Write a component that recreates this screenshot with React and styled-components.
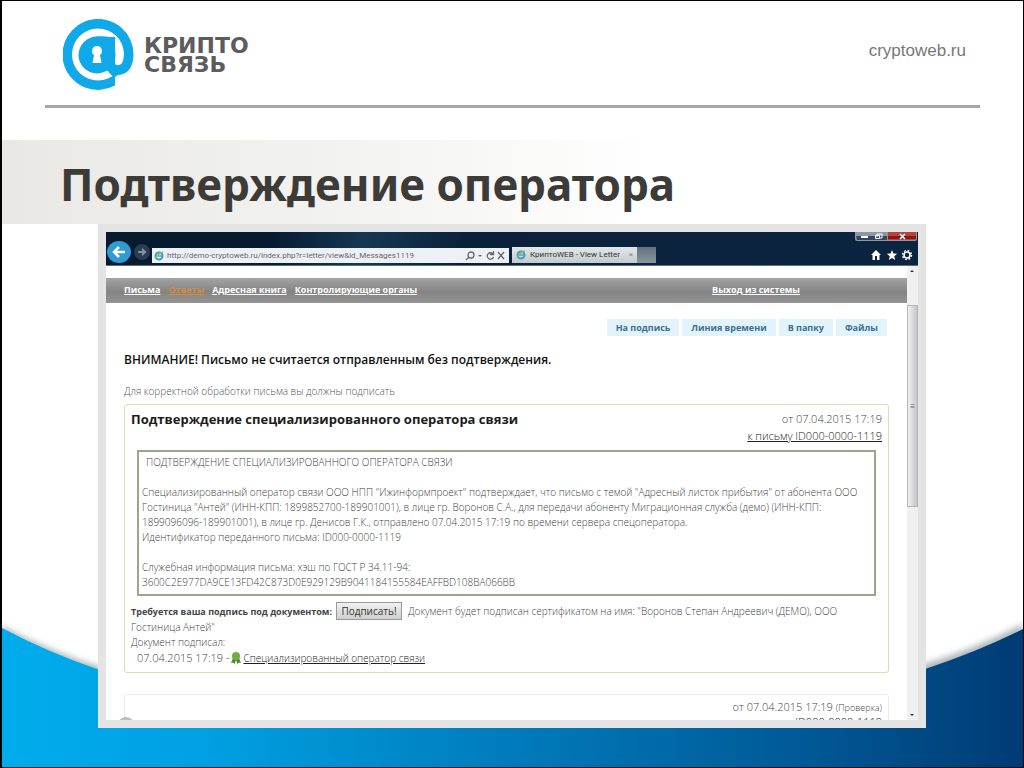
import React from 'react';
import styled, { createGlobalStyle } from 'styled-components';

const GlobalStyle = createGlobalStyle`
  * {
    box-sizing: border-box;
  }
  body {
    margin: 0;
    font-family: 'Open Sans', 'Noto Sans', sans-serif;
    background: #fff;
  }
  h1, h2, p {
    margin: 0;
  }
`;

const menu = ['Письма', 'Ответы', 'Адресная книга', 'Контролирующие органы'];
const actions = ['На подпись', 'Линия времени', 'В папку', 'Файлы'];

const App = () => {
  return (
    <>
      <GlobalStyle />
      <StSlide>
        <Wave />
        <StHeader>
          <StLogo>
            <LogoMark />
            <span>
              КРИПТО
              <br />
              СВЯЗЬ
            </span>
          </StLogo>
          <StSite href="#site">cryptoweb.ru</StSite>
        </StHeader>
        <StTitle>Подтверждение оператора</StTitle>
        <StFrame>
          <BrowserBar />
          <StViewport>
            <StPage>
              <StMenu>
                {menu.map((name) => (
                  <StMenuLink key={name} href="#menu" $active={name === 'Ответы'}>
                    {name}
                  </StMenuLink>
                ))}
                <StExit href="#exit">Выход из системы</StExit>
              </StMenu>
              <StContent>
                <StActions>
                  {actions.map((name) => (
                    <StAction key={name} type="button">
                      {name}
                    </StAction>
                  ))}
                </StActions>
                <StWarning>
                  ВНИМАНИЕ! Письмо не считается отправленным без подтверждения.
                </StWarning>
                <StHint>Для корректной обработки письма вы должны подписать</StHint>
                <Letter />
                <StNextCard>
                  <StBadge />
                  <StDate>
                    от 07.04.2015 17:19 <small>(Проверка)</small>
                  </StDate>
                  <StLink href="#next">ID000-0000-1119</StLink>
                </StNextCard>
              </StContent>
            </StPage>
            <StScroll>
              <StArrow viewBox="0 0 10 10">
                <path d="M3 6l2-2 2 2z" />
              </StArrow>
              <StThumb>≡</StThumb>
              <StArrow viewBox="0 0 10 10">
                <path d="M3 4l2 2 2-2z" />
              </StArrow>
            </StScroll>
          </StViewport>
        </StFrame>
      </StSlide>
    </>
  );
};

const Letter = () => (
  <StCard>
    <StCardHead>
      <h2>Подтверждение специализированного оператора связи</h2>
      <StMeta>
        <StDate>от 07.04.2015 17:19</StDate>
        <StLink href="#letter">к письму ID000-0000-1119</StLink>
      </StMeta>
    </StCardHead>
    <StDocument>
      <StDocTitle>ПОДТВЕРЖДЕНИЕ СПЕЦИАЛИЗИРОВАННОГО ОПЕРАТОРА СВЯЗИ</StDocTitle>
      <p>
        Специализированный оператор связи ООО НПП "Ижинформпроект" подтверждает,
        что письмо с темой "Адресный листок прибытия" от абонента ООО
        <br />
        Гостиница "Антей" (ИНН-КПП: 1899852700-189901001), в лице гр. Воронов
        С.А., для передачи абоненту Миграционная служба (демо) (ИНН-КПП:
        <br />
        1899096096-189901001), в лице гр. Денисов Г.К., отправлено 07.04.2015
        17:19 по времени сервера спецоператора.
        <br />
        Идентификатор переданного письма: ID000-0000-1119
      </p>
      <p>
        Служебная информация письма: хэш по ГОСТ Р 34.11-94:
        <br />
        3600C2E977DA9CE13FD42C873D0E929129B9041184155584EAFFBD108BA066BB
      </p>
    </StDocument>
    <StSign>
      <b>Требуется ваша подпись под документом:</b>
      <StSignButton type="button">Подписать!</StSignButton>
      Документ будет подписан сертификатом на имя: "Воронов Степан Андреевич
      (ДЕМО), ООО
      <br />
      Гостиница Антей"
      <br />
      Документ подписал:
      <StSigner>
        <StDate>07.04.2015 17:19 -</StDate>
        <svg width="10" height="12" viewBox="0 0 10 12">
          <path d="M2 6L0 11l2-.5L3.500 12 5 8l1.500 4L8 10.500l2 .5-2-5z" fill="#4d8a2c" />
          <circle cx="5" cy="4" r="4" fill="#6fae45" />
        </svg>
        <StLink href="#operator">Специализированный оператор связи</StLink>
      </StSigner>
    </StSign>
  </StCard>
);

const BrowserBar = () => (
  <StBrowser>
    <StRound aria-label="Назад" $back>
      <svg width="16" height="16" viewBox="0 0 16 16" fill="none" stroke="#fff" strokeWidth="2.500">
        <path d="M14 8H3M8 3L3 8l5 5" />
      </svg>
    </StRound>
    <StRound aria-label="Вперёд">
      <svg width="10" height="10" viewBox="0 0 16 16" fill="none" stroke="#8795a3" strokeWidth="3">
        <path d="M2 8h11M8 3l5 5-5 5" />
      </svg>
    </StRound>
    <StAddress>
      <PageIcon />
      <input
        aria-label="Адрес"
        defaultValue="http://demo-cryptoweb.ru/index.php?r=letter/view&id_Messages1119"
      />
      <svg width="40" height="10" viewBox="0 0 40 10" fill="none" stroke="#666" strokeWidth="1.300">
        <circle cx="6" cy="4" r="3" />
        <path d="M4 6L1 9M28 3a3.200 3.200 0 1 0 .5 3M28.500 0v3.500H25M33 1l6 7M39 1l-6 7" />
        <path d="M13 4h4l-2 2z" fill="#666" stroke="none" />
      </svg>
    </StAddress>
    <StTab>
      <PageIcon />
      <span>КриптоWEB - View Letter</span>
      <i>×</i>
    </StTab>
    <StNewTab />
    <StTools>
      <svg width="62" height="10" viewBox="0 0 62 10">
        <path d="M0 0h62v7q0 2-2 2H2Q0 9 0 7z" fill="#8d98a5" />
        <path d="M1 4h31v4H2z" fill="#35475b" />
        <path d="M33 0h28v7q0 1-1 1H33z" fill="#b9403c" />
        <path d="M33 4h28v3H33z" fill="#8d1712" />
        <path d="M6 4h7v2H6z" fill="#fff" />
        <path d="M22 5V2h5v4h-2M20.500 3.500h4v3h-4z" fill="none" stroke="#fff" />
        <path d="M45 2l5 5M50 2l-5 5" stroke="#fff" strokeWidth="1.500" />
      </svg>
      <svg width="42" height="12" viewBox="0 0 42 12" fill="#fff">
        <path d="M5 1L0 6h1.500v5H4V7h2v4h2.500V6H10z" />
        <path d="M21 1l1.400 3.600 3.800.2-3 2.400 1 3.800-3.200-2.100-3.200 2.100 1-3.800-3-2.400 3.800-.2z" />
        <circle cx="36" cy="6" r="3" fill="none" stroke="#fff" strokeWidth="1.600" />
        <circle cx="36" cy="6" r="4.500" fill="none" stroke="#fff" strokeWidth="1.400" strokeDasharray="1.770 1.770" />
      </svg>
    </StTools>
  </StBrowser>
);

const PageIcon = () => (
  <svg width="10" height="10" viewBox="0 0 10 10" fill="none">
    <circle cx="5" cy="5" r="3.500" stroke="#3f9bc9" strokeWidth="2" />
    <path d="M2 5h6" stroke="#3f9bc9" strokeWidth="1.300" />
    <path d="M1 8Q4 2 9 1" stroke="#8cba6c" strokeWidth="1.300" />
  </svg>
);

const LogoMark = () => (
  <svg width="72" height="72" viewBox="0 0 72 72" aria-hidden="true">
    <path d="M52 66.600A35.500 35.500 0 1 1 70.500 35.500Q70 57 52 56z" fill="#0fa8e8" />
    <circle cx="35" cy="35.500" r="26" fill="#fff" />
    <circle cx="34" cy="36" r="18.500" fill="#0fa8e8" />
    <path
      d="M34 17.500Q42 17 46 18H52V43Q52 47 56 46Q60 45 61 38L66 48L52 58Q48 57 45 52L36 50z"
      fill="#0fa8e8"
    />
    <path d="M34 27a5 5 0 0 0-3 9l-1.500 8h9L37 36a5 5 0 0 0-3-9z" fill="#fff" />
  </svg>
);

const Wave = () => (
  <StWave viewBox="0 0 1024 168" preserveAspectRatio="none" aria-hidden="true">
    <defs>
      <linearGradient id="sea">
        <stop offset="0" stopColor="#00aced" />
        <stop offset=".2" stopColor="#00a0e2" />
        <stop offset=".5" stopColor="#007bbb" />
        <stop offset=".8" stopColor="#005794" />
        <stop offset="1" stopColor="#003b75" />
      </linearGradient>
      <filter id="soft" x="-5%" y="-20%" width="110%" height="140%">
        <feGaussianBlur stdDeviation="3" />
      </filter>
    </defs>
    <path d="M0 27Q45 51 98 68Q512 150 926 65Q980 48 1024 25V168H0z" fill="#a9b6b8" filter="url(#soft)" />
    <path d="M0 29Q45 53 98 71Q512 152 926 70Q980 52 1024 30V168H0z" fill="url(#sea)" />
  </StWave>
);

export default App;

const StSlide = styled.main`
  position: relative;
  height: 100vh;
  min-height: 600px;
  display: flex;
  flex-direction: column;
  overflow: hidden;
  border: 1px solid #000;
  border-left-width: 2px;
`;

const StWave = styled.svg`
  position: absolute;
  left: 0;
  bottom: 0;
  width: 100%;
  height: 168px;
`;

const StHeader = styled.header`
  display: flex;
  justify-content: space-between;
  align-items: flex-start;
  height: 107px;
  margin: 0 43px 32px;
  padding: 18px 14px 0 18px;
  border-bottom: 3px solid #a6a6a9;
`;

const StLogo = styled.div`
  display: flex;
  gap: 9px;
  color: #5c5c5e;
  font: bold 22px/19px 'DejaVu Sans', sans-serif;
  & span {
    padding-top: 17px;
  }
`;

const StSite = styled.a`
  margin-top: 22px;
  color: #77777a;
  font: 17px/20px 'Liberation Sans', sans-serif;
  text-decoration: none;
`;

const StTitle = styled.h1`
  height: 84px;
  padding-left: 58px;
  color: #3d3b38;
  background: linear-gradient(90deg, #e9e8e4, #f3f3f1 35%, #fff 64%);
  font: bold 44px/88px 'Noto Sans', sans-serif;
`;

const StFrame = styled.section`
  position: relative;
  flex: 1;
  min-height: 0;
  display: flex;
  flex-direction: column;
  margin: 0 97px 39px 96px;
  border: 8px solid #e4e4e4;
  background: #fff;
`;

const StBrowser = styled.div`
  display: flex;
  align-items: flex-end;
  height: 34px;
  padding-bottom: 2px;
  background: linear-gradient(100deg, #061a30 20%, #163753 32%, #0a2139 44%, #0b2440);
  border-bottom: 1px solid #5d6c7a;
`;

const StRound = styled.button`
  display: flex;
  align-items: center;
  justify-content: center;
  flex: none;
  width: ${(props) => (props.$back ? '24px' : '16px')};
  height: ${(props) => (props.$back ? '22px' : '16px')};
  margin: ${(props) => (props.$back ? '0 3px 0 1px' : '0 2px 3px 0')};
  padding: 0;
  border: 0;
  border-radius: 50%;
  background: ${(props) => (props.$back ? '#2f9bd2' : '#2a3c4f')};
`;

const StAddress = styled.div`
  display: flex;
  align-items: center;
  gap: 3px;
  width: 357px;
  height: 15px;
  padding: 0 4px 0 2px;
  background: #edf1f6;
  & input {
    flex: 1;
    min-width: 0;
    padding: 0;
    border: 0;
    background: none;
    color: #666;
    font: 8px/12px Roboto, sans-serif;
  }
`;

const StTab = styled.div`
  display: flex;
  align-items: center;
  gap: 4px;
  width: 125px;
  height: 16px;
  margin-left: 3px;
  padding: 0 4px;
  background: linear-gradient(#e3e8ea, #c3cace);
  color: #333;
  font: 8px/12px Roboto, sans-serif;
  white-space: nowrap;
  & span {
    flex: 1;
  }
  & i {
    color: #888;
    font-style: normal;
  }
`;

const StNewTab = styled.div`
  width: 19px;
  height: 16px;
  background: linear-gradient(#5f717c, #8997a0);
`;

const StTools = styled.div`
  display: flex;
  flex-direction: column;
  align-items: flex-end;
  justify-content: space-between;
  align-self: stretch;
  margin-left: auto;
  padding: 0 1px 2px 0;
  & svg + svg {
    margin-right: 4px;
  }
`;

const StViewport = styled.div`
  flex: 1;
  min-height: 0;
  display: flex;
`;

const StPage = styled.div`
  flex: 1;
  min-width: 0;
  overflow: hidden;
  padding-top: 12px;
`;

const StMenu = styled.nav`
  display: flex;
  align-items: center;
  gap: 8px;
  height: 25px;
  padding: 0 107px 2px 18px;
  background: linear-gradient(#a3a3a3, #848484 55%, #939393);
`;

const StMenuLink = styled.a`
  color: ${(props) => (props.$active ? '#d48c3c' : '#fff')};
  font: bold 9px/14px 'Open Sans', sans-serif;
  text-decoration: underline;
`;

const StExit = styled(StMenuLink)`
  margin-left: auto;
`;

const StContent = styled.div`
  display: flex;
  flex-direction: column;
  padding: 16px 18px 0;
`;

const StActions = styled.div`
  display: flex;
  justify-content: flex-end;
  gap: 3px;
  margin-right: 2px;
`;

const StAction = styled.button`
  height: 17px;
  padding: 0 9px;
  border: 0;
  background: #e3f3fb;
  color: #3c6f8f;
  font: bold 9px/17px 'Open Sans', sans-serif;
`;

const StWarning = styled.p`
  margin-top: 16px;
  color: #111;
  font: 600 12px/16px 'Open Sans', sans-serif;
`;

const StHint = styled.p`
  margin: 15px 0 5px;
  color: #555;
  font-size: 10px;
  font-weight: 300;
  line-height: 16px;
`;

const StCard = styled.article`
  height: 269px;
  padding: 6px 6px 0;
  border: 1px solid #d5dfb8;
  border-radius: 3px;
  color: #444;
  font-weight: 300;
`;

const StCardHead = styled.div`
  display: flex;
  justify-content: space-between;
  height: 39px;
  & h2 {
    color: #1c1c1c;
    font: bold 13px/16px 'Open Sans', sans-serif;
  }
`;

const StMeta = styled.div`
  display: flex;
  flex-direction: column;
  align-items: flex-end;
  gap: 1px;
  font-size: 11px;
`;

const StDate = styled.span`
  font-size: 11px;
  line-height: 16px;
  & small {
    font-size: 9px;
  }
`;

const StLink = styled.a`
  color: #222;
  line-height: 16px;
  text-decoration: underline;
`;

const StDocument = styled.div`
  margin: 0 6px 6px;
  padding: 3px 3px 4px;
  border: 2px solid #98a68a;
  font-size: 10px;
  line-height: 15px;
  white-space: nowrap;
  & p + p {
    margin-top: 15px;
  }
`;

const StDocTitle = styled.p`
  padding-left: 4px;
`;

const StSign = styled.div`
  font-size: 10px;
  line-height: 15px;
  & b {
    font-size: 9px;
    font-weight: 700;
  }
`;

const StSignButton = styled.button`
  height: 18px;
  width: 66px;
  margin: 0 6px 0 4px;
  padding: 0;
  border: 1px solid #999;
  background: linear-gradient(#f0f0f0, #cfcfcf);
  color: #333;
  font: 10px/14px 'Open Sans', sans-serif;
`;

const StSigner = styled.div`
  display: flex;
  align-items: center;
  gap: 2px;
  padding-left: 6px;
`;

const StNextCard = styled(StCard)`
  position: relative;
  display: flex;
  flex-direction: column;
  align-items: flex-end;
  margin-top: 21px;
  padding-top: 4px;
  border-color: #ececec;
  font-size: 11px;
  & a {
    line-height: 12px;
  }
`;

const StBadge = styled.span`
  position: absolute;
  left: -8px;
  top: 22px;
  width: 18px;
  height: 18px;
  border-radius: 50%;
  background: #bbb;
`;

const StScroll = styled.div`
  display: flex;
  flex-direction: column;
  width: 11px;
  background: #f0f0f1;
`;

const StArrow = styled.svg`
  width: 10px;
  height: 10px;
  fill: #333;
`;

const StThumb = styled.div`
  height: 202px;
  margin: 29px 0 auto;
  border: 1px solid #b5b5b8;
  background: linear-gradient(90deg, #f0f0f0, #c6c6c9);
  color: #666;
  font-size: 8px;
  line-height: 200px;
  text-align: center;
`;
